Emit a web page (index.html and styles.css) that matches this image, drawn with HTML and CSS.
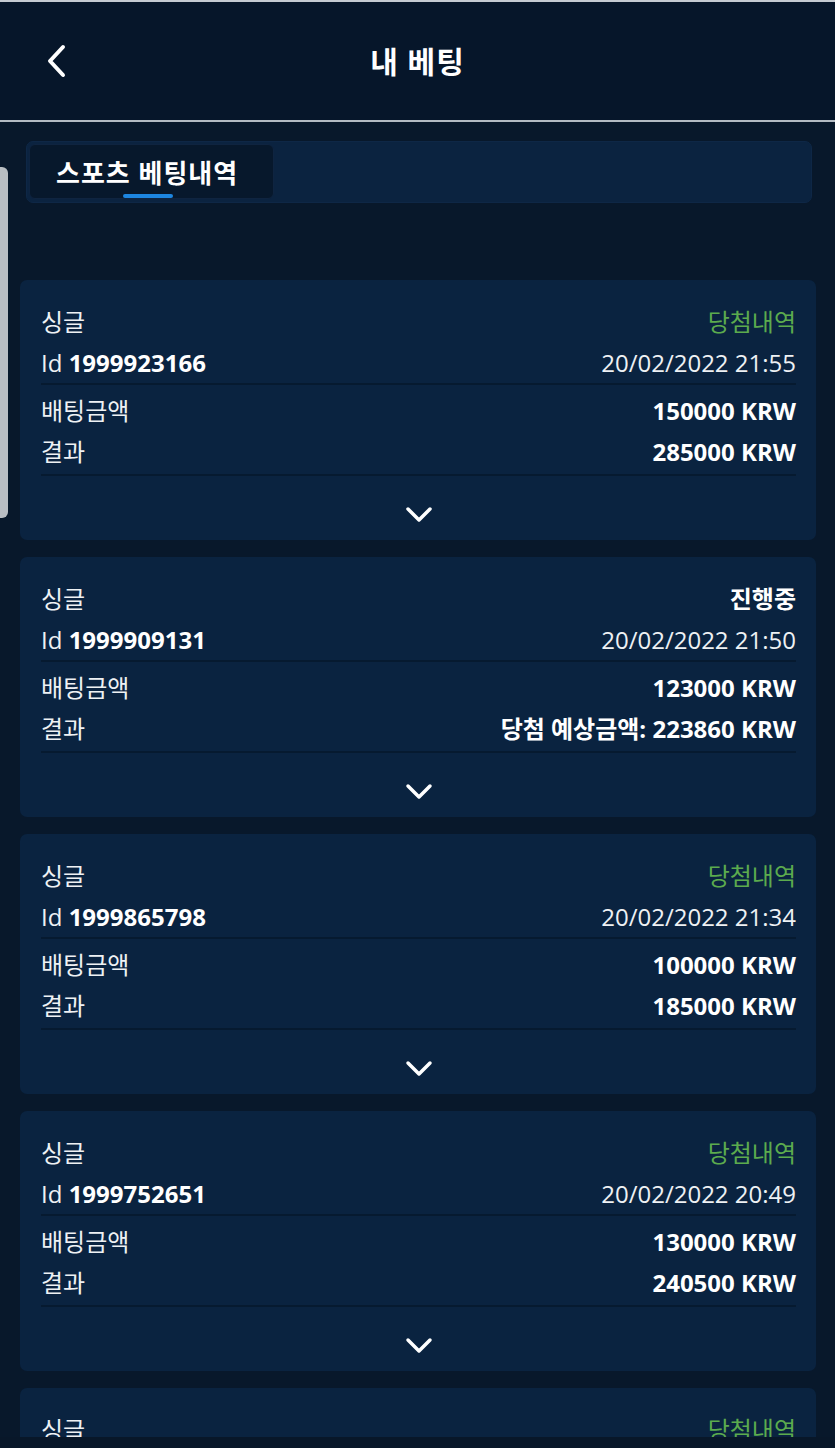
FILE: index.html
```html
<!DOCTYPE html>
<html lang="ko">
<head>
	<meta charset="UTF-8">
	<title>내 베팅</title>
	<link rel="stylesheet" href="styles.css">
</head>
<body>

	<!-- Barra do topo -->
	<header class="topo">
		<a class="voltar">
			<svg width="20" height="34" viewBox="0 0 20 34"><polyline points="17,3 4,17 17,31" fill="none" stroke="#ffffff" stroke-width="4" stroke-linecap="round" stroke-linejoin="round"/></svg>
		</a>
		<h1 class="titulo">내 베팅</h1>
		<span></span>
	</header>

	<div class="barra-rolagem"></div>

	<!-- Abas -->
	<nav class="abas">
		<div class="aba ativa">스포츠 베팅내역</div>
	</nav>

	<!-- Lista de apostas -->
	<main class="lista">

		<div class="cartao">
			<div class="grupo topo-cartao">
				<div class="linha"><span>싱글</span><span class="ganhou">당첨내역</span></div>
				<div class="linha"><span>Id <b>1999923166</b></span><span class="data">20/02/2022 21:55</span></div>
			</div>
			<div class="grupo valores">
				<div class="linha"><span>배팅금액</span><b>150000 KRW</b></div>
				<div class="linha"><span>결과</span><b>285000 KRW</b></div>
			</div>
			<div class="mais"><svg width="28" height="18" viewBox="0 0 28 18"><polyline points="3,3 14,14 25,3" fill="none" stroke="#ffffff" stroke-width="3.5" stroke-linecap="round" stroke-linejoin="round"/></svg></div>
		</div>

		<div class="cartao">
			<div class="grupo topo-cartao">
				<div class="linha"><span>싱글</span><b>진행중</b></div>
				<div class="linha"><span>Id <b>1999909131</b></span><span class="data">20/02/2022 21:50</span></div>
			</div>
			<div class="grupo valores">
				<div class="linha"><span>배팅금액</span><b>123000 KRW</b></div>
				<div class="linha"><span>결과</span><b>당첨 예상금액: 223860 KRW</b></div>
			</div>
			<div class="mais"><svg width="28" height="18" viewBox="0 0 28 18"><polyline points="3,3 14,14 25,3" fill="none" stroke="#ffffff" stroke-width="3.5" stroke-linecap="round" stroke-linejoin="round"/></svg></div>
		</div>

		<div class="cartao">
			<div class="grupo topo-cartao">
				<div class="linha"><span>싱글</span><span class="ganhou">당첨내역</span></div>
				<div class="linha"><span>Id <b>1999865798</b></span><span class="data">20/02/2022 21:34</span></div>
			</div>
			<div class="grupo valores">
				<div class="linha"><span>배팅금액</span><b>100000 KRW</b></div>
				<div class="linha"><span>결과</span><b>185000 KRW</b></div>
			</div>
			<div class="mais"><svg width="28" height="18" viewBox="0 0 28 18"><polyline points="3,3 14,14 25,3" fill="none" stroke="#ffffff" stroke-width="3.5" stroke-linecap="round" stroke-linejoin="round"/></svg></div>
		</div>

		<div class="cartao">
			<div class="grupo topo-cartao">
				<div class="linha"><span>싱글</span><span class="ganhou">당첨내역</span></div>
				<div class="linha"><span>Id <b>1999752651</b></span><span class="data">20/02/2022 20:49</span></div>
			</div>
			<div class="grupo valores">
				<div class="linha"><span>배팅금액</span><b>130000 KRW</b></div>
				<div class="linha"><span>결과</span><b>240500 KRW</b></div>
			</div>
			<div class="mais"><svg width="28" height="18" viewBox="0 0 28 18"><polyline points="3,3 14,14 25,3" fill="none" stroke="#ffffff" stroke-width="3.5" stroke-linecap="round" stroke-linejoin="round"/></svg></div>
		</div>

		<div class="cartao">
			<div class="grupo topo-cartao">
				<div class="linha"><span>싱글</span><span class="ganhou">당첨내역</span></div>
				<div class="linha"><span>Id <b>1999700412</b></span><span class="data">20/02/2022 20:12</span></div>
			</div>
		</div>

	</main>

	<div class="borda-baixo"></div>

</body>
</html>
```

FILE: styles.css
```css
	* {
		box-sizing: border-box;
	}

	body {
		margin: 0;
		background-color: #08182b;
		color: #ffffff;
		font-family: "Open Sans", "Noto Sans CJK KR", sans-serif;
		font-size: 24px;
		height: 1448px;
		overflow: hidden;
	}

	/* topo */
	header.topo {
		height: 122px;
		border-top: 2px solid #c4cbd2;
		border-bottom: 2px solid #b3bbc3;
		background-color: #06162a;
		display: grid;
		grid-template-columns: 1fr auto 1fr;
		align-items: center;
		padding: 0 46px;
	}

	a.voltar {
		display: flex;
		align-items: center;
	}

	h1.titulo {
		margin: 0 0 2px 0;
		font-size: 30px;
		font-weight: bold;
		letter-spacing: 1px;
	}

	div.barra-rolagem {
		position: fixed;
		left: 0;
		top: 167px;
		width: 8px;
		height: 351px;
		background-color: #b9bec3;
		border-radius: 0 6px 6px 0;
	}

	/* abas */
	nav.abas {
		margin: 19px 23px 0 26px;
		height: 62px;
		padding: 2px;
		background-color: #0b2340;
		border: 1px solid #0e2746;
		border-radius: 7px;
		display: flex;
	}

	div.aba {
		position: relative;
		width: 245px;
		height: 55px;
		padding-left: 26px;
		line-height: 56px;
		font-size: 26px;
		letter-spacing: 1px;
		font-weight: bold;
		background-color: #07182c;
		border: 1px solid #0f2440;
		border-radius: 6px;
	}

	div.aba.ativa::after {
		content: "";
		position: absolute;
		left: 93px;
		bottom: 0;
		width: 50px;
		height: 4px;
		border-radius: 2px;
		background-color: #1d86e0;
	}

	/* cartoes */
	main.lista {
		height: 1234px;
		padding-top: 77px;
		overflow: hidden;
	}

	div.cartao {
		margin: 0 19px 17px 20px;
		height: 260px;
		padding: 0 20px 0 21px;
		background-color: #0a2340;
		border-radius: 7px;
	}

	div.linha {
		display: flex;
		justify-content: space-between;
		height: 41px;
		line-height: 41px;
		color: #eef1f4;
	}

	div.linha b {
		font-weight: bold;
		color: #ffffff;
	}

	div.grupo.topo-cartao {
		padding-top: 21px;
		border-bottom: 2px solid #061a30;
	}

	div.grupo.valores {
		padding-top: 5px;
		padding-bottom: 2px;
		border-bottom: 2px solid #061a30;
	}

	span.ganhou {
		color: #5cab4e;
	}

	div.mais {
		display: flex;
		justify-content: center;
		padding-top: 30px;
	}

	div.borda-baixo {
		height: 11px;
		background-color: #081729;
	}
```
